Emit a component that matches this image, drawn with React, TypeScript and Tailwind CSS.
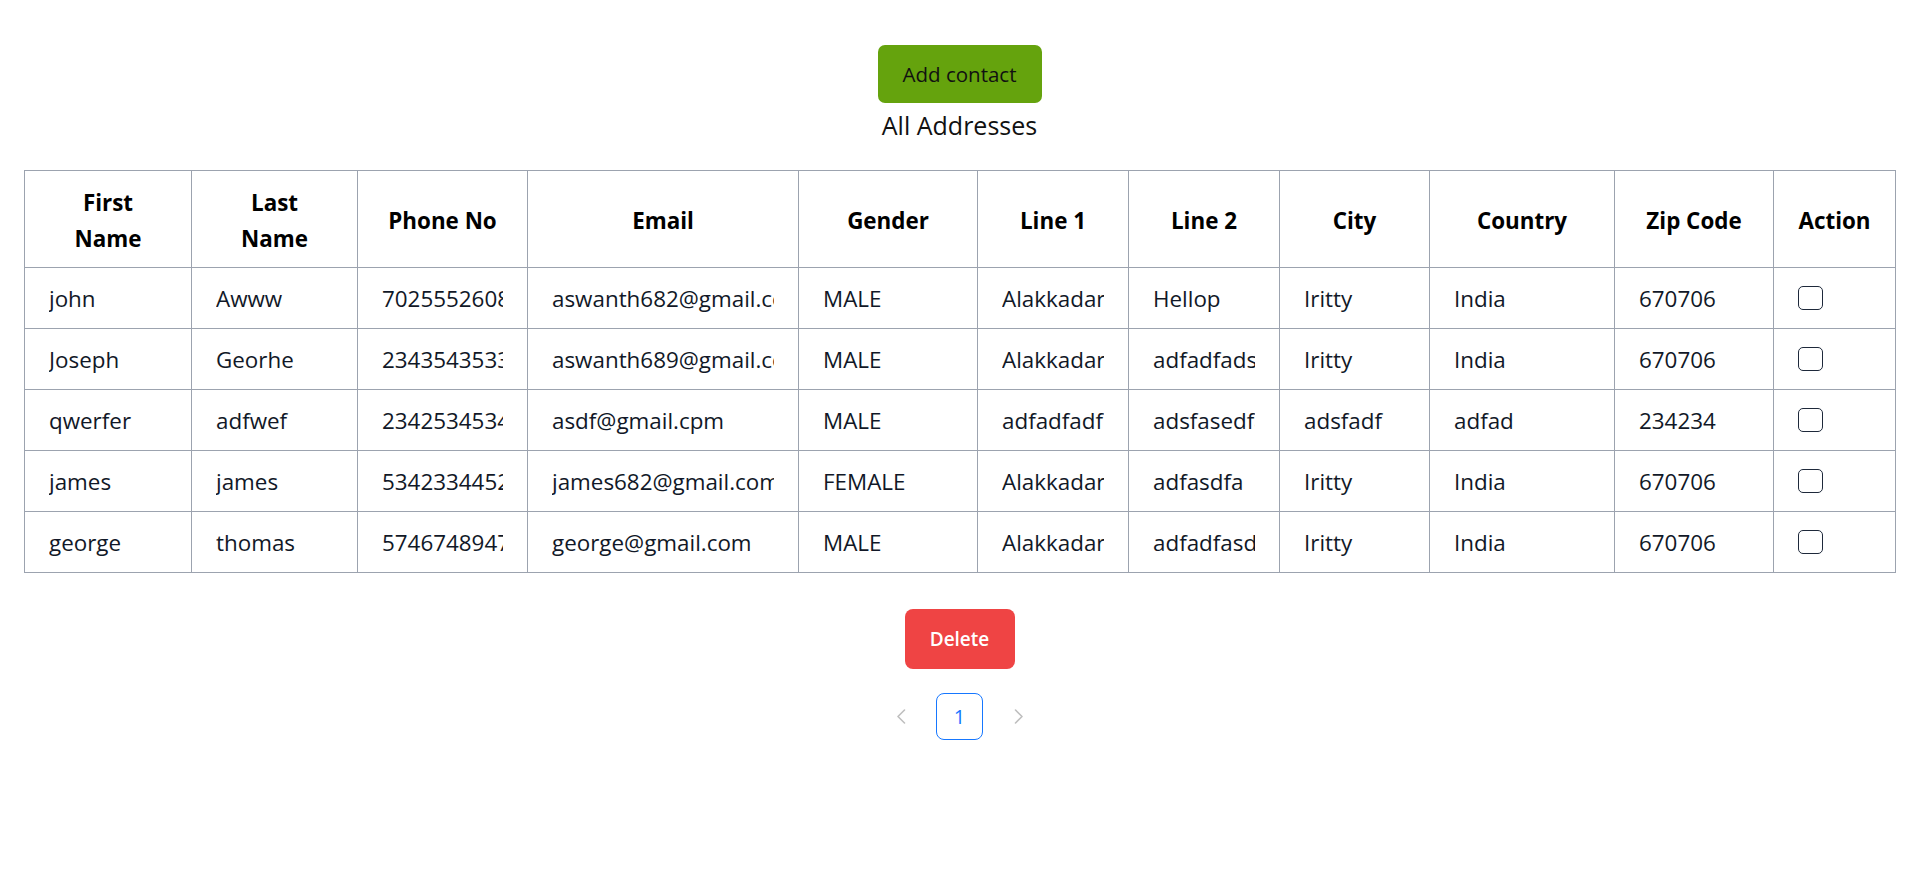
import React from "react";

type Row = {
  first: string;
  last: string;
  phone: string;
  email: string;
  gender: string;
  line1: string;
  line2: string;
  city: string;
  country: string;
  zip: string;
};

const rows: Row[] = [
  { first: "john", last: "Awww", phone: "7025552608", email: "aswanth682@gmail.com", gender: "MALE", line1: "Alakkadar", line2: "Hellop", city: "Iritty", country: "India", zip: "670706" },
  { first: "Joseph", last: "Georhe", phone: "2343543533", email: "aswanth689@gmail.com", gender: "MALE", line1: "Alakkadar", line2: "adfadfadsf", city: "Iritty", country: "India", zip: "670706" },
  { first: "qwerfer", last: "adfwef", phone: "2342534534", email: "asdf@gmail.cpm", gender: "MALE", line1: "adfadfadf", line2: "adsfasedfa", city: "adsfadf", country: "adfad", zip: "234234" },
  { first: "james", last: "james", phone: "5342334452", email: "james682@gmail.com", gender: "FEMALE", line1: "Alakkadar", line2: "adfasdfa", city: "Iritty", country: "India", zip: "670706" },
  { first: "george", last: "thomas", phone: "5746748947", email: "george@gmail.com", gender: "MALE", line1: "Alakkadar", line2: "adfadfasd", city: "Iritty", country: "India", zip: "670706" },
];

function Cell({ children }: { children: React.ReactNode }) {
  return (
    <td className="border border-[#9ca3af] px-[24px] pt-[13px] pb-[11px] align-middle">
      <div className="overflow-hidden whitespace-nowrap">{children}</div>
    </td>
  );
}

function Head({ children }: { children: React.ReactNode }) {
  return (
    <th className="border border-[#9ca3af] px-[24px] pt-[14px] pb-[10px] text-center font-bold align-middle">
      {children}
    </th>
  );
}

export default function App() {
  return (
    <div className="min-h-screen bg-white pl-[24px] pr-[20px] font-['Open_Sans',sans-serif] text-[#111827]">
      <div className="flex flex-col items-center pt-[45px]">
        <button className="flex h-[58px] w-[164px] items-center justify-center rounded-[7px] bg-[#65a30d] text-[20.5px] font-medium text-[#111111]">
          Add contact
        </button>
        <h2 className="mt-[5px] text-[25px] leading-[34px] font-normal text-[#111111]">All Addresses</h2>
      </div>

      <table className="mt-[28px] w-full table-fixed border-collapse text-[22.4px] leading-[36px]">
        <colgroup>
          <col className="w-[167px]" />
          <col className="w-[166px]" />
          <col className="w-[170px]" />
          <col className="w-[271px]" />
          <col className="w-[179px]" />
          <col className="w-[151px]" />
          <col className="w-[151px]" />
          <col className="w-[150px]" />
          <col className="w-[185px]" />
          <col className="w-[159px]" />
          <col className="w-[122px]" />
        </colgroup>
        <thead>
          <tr className="text-black">
            <Head>
              First
              <br />
              Name
            </Head>
            <Head>
              Last
              <br />
              Name
            </Head>
            <Head>Phone No</Head>
            <Head>Email</Head>
            <Head>Gender</Head>
            <Head>Line 1</Head>
            <Head>Line 2</Head>
            <Head>City</Head>
            <Head>Country</Head>
            <Head>Zip Code</Head>
            <Head>Action</Head>
          </tr>
        </thead>
        <tbody>
          {rows.map((r, i) => (
            <tr key={i}>
              <Cell>{r.first}</Cell>
              <Cell>{r.last}</Cell>
              <Cell>{r.phone}</Cell>
              <Cell>{r.email}</Cell>
              <Cell>{r.gender}</Cell>
              <Cell>{r.line1}</Cell>
              <Cell>{r.line2}</Cell>
              <Cell>{r.city}</Cell>
              <Cell>{r.country}</Cell>
              <Cell>{r.zip}</Cell>
              <td className="border border-[#9ca3af] px-[24px] py-[12px] align-middle">
                <div className="flex h-[36px] items-center">
                  <div className="h-[24px] w-[25px] rounded-[5px] border-[1.5px] border-[#1e293b] bg-white" />
                </div>
              </td>
            </tr>
          ))}
        </tbody>
      </table>

      <div className="flex flex-col items-center">
        <button className="mt-[36px] flex h-[60px] w-[110px] items-center justify-center rounded-[8px] bg-[#ef4444] text-[19px] font-semibold text-white">
          Delete
        </button>
        <div className="mt-[24px] flex items-center gap-[12px]">
          <div className="flex h-[47px] w-[47px] items-center justify-center">
            <svg width="10" height="15" viewBox="0 0 10 15" fill="none">
              <path d="M8.5 1 L2 7.5 L8.5 14" stroke="#bfbfbf" strokeWidth="1.6" strokeLinecap="round" strokeLinejoin="round" />
            </svg>
          </div>
          <div className="flex h-[47px] w-[47px] items-center justify-center rounded-[8px] border border-[#1677ff] text-[20px] text-[#1677ff]">
            1
          </div>
          <div className="flex h-[47px] w-[47px] items-center justify-center">
            <svg width="10" height="15" viewBox="0 0 10 15" fill="none">
              <path d="M1.5 1 L8 7.5 L1.5 14" stroke="#bfbfbf" strokeWidth="1.6" strokeLinecap="round" strokeLinejoin="round" />
            </svg>
          </div>
        </div>
      </div>
    </div>
  );
}
